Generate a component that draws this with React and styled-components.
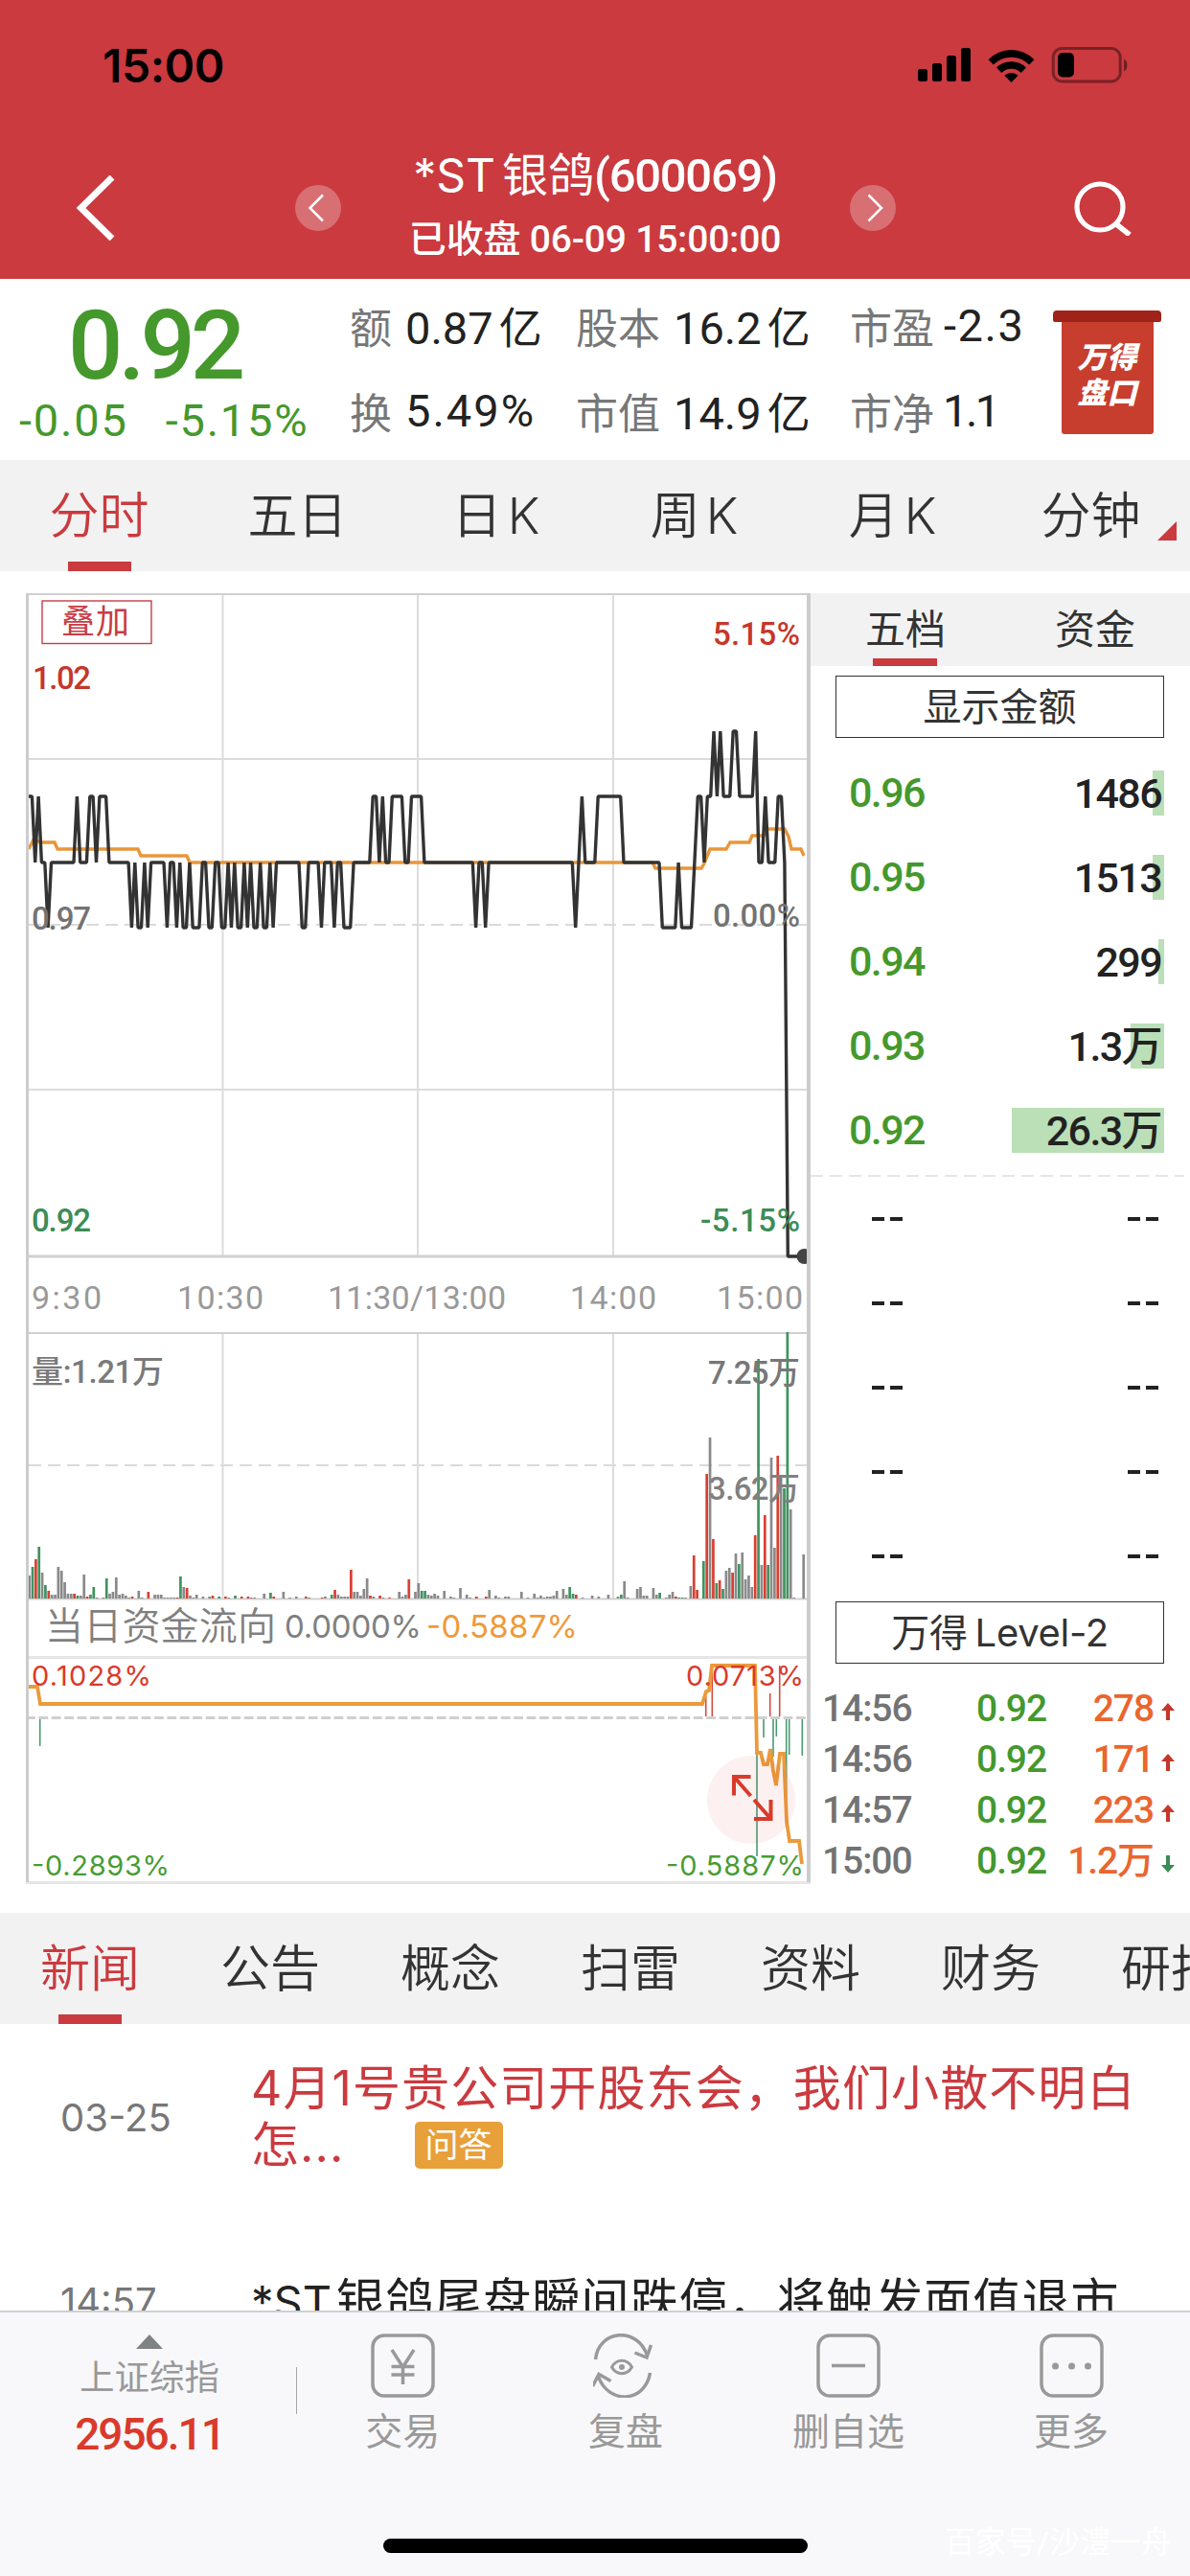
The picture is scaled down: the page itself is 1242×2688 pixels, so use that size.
import styled, {createGlobalStyle} from 'styled-components';

const GlobalStyle = createGlobalStyle`
    * {
        box-sizing: border-box;
    }

    body {
        margin: 0;
        background: #fff;
        font-family: Roboto, 'Noto Sans CJK SC', sans-serif;
        color: #333;
    }

    svg {
        display: block;
        flex: none;
    }
`;

const Screen = styled.div`
    display: flex;
    flex-direction: column;
    width: 1242px;
    height: 2688px;
    overflow: hidden;
    white-space: nowrap;
`;

/* header */
const Header = styled.header`
    height: 291px;
    flex: none;
    background: #ca3a3f;
    color: #fff;
`;
const StatusBar = styled.div`
    display: flex;
    align-items: center;
    justify-content: space-between;
    height: 136px;
    padding: 0 64px 0 107px;
    color: #000;
`;
const Clock = styled.span`
    font-family: Inter, sans-serif;
    font-weight: 600;
    font-size: 48px;
    letter-spacing: -0.4px;
`;
const Nav = styled.nav`
    display: grid;
    grid-template-columns: 1fr 627px 1fr;
    align-items: center;
    height: 155px;
    padding: 7px 61px 0 79px;
`;
const Switcher = styled.div`
    display: flex;
    align-items: center;
    justify-content: space-between;
    margin-left: -9px;
    margin-right: 9px;
`;
const Titles = styled.div`
    text-align: center;
    margin-top: -1px;
`;
const Title = styled.h1`
    margin: 0;
    font-size: 49px;
    font-weight: 500;
    line-height: 66px;
    letter-spacing: -1.3px;

    span {
        font-family: Inter, 'Noto Sans CJK SC', sans-serif;
        font-weight: 400;
        font-size: 48px;
        letter-spacing: 0;
    }

    i {
        font-style: normal;
        margin-left: 7px;
    }
`;
const Subtitle = styled.p`
    margin: 0;
    font-size: 39px;
    font-weight: 500;
    line-height: 67px;
    letter-spacing: -0.2px;
`;
const RightEnd = styled.div`
    display: flex;
    justify-content: flex-end;
`;

/* quote */
const Quote = styled.section`
    display: flex;
    flex: none;
    height: 189px;
`;
const Price = styled.div`
    width: 366px;
    padding-top: 20px;
    color: #45982c;
`;
const BigPrice = styled.div`
    padding-left: 71px;
    font-size: 101px;
    font-weight: 500;
    line-height: 100px;
    letter-spacing: -5px;
`;
const Change = styled.div`
    display: flex;
    gap: 39px;
    padding-left: 20px;
    font-size: 47px;
    line-height: 56px;
    letter-spacing: 1.8px;
`;
const Stats = styled.div`
    display: grid;
    grid-template-columns: 236px 286px 212px;
    grid-template-rows: 89px 89px;
    padding-top: 4px;
    margin-left: -1px;
`;
const Stat = styled.div`
    display: flex;
    align-items: center;
    gap: ${(p) => p.$gap || 14}px;
    font-size: 47px;
    letter-spacing: ${(p) => p.$ls || 0}px;
    color: #222;
`;
const Label = styled.span`
    font-size: 44px;
    letter-spacing: 0;
    color: #777;
`;
const Unit = styled.span`
    font-size: 45px;
    margin-left: 6px;
`;
const Badge = styled.div`
    width: 113px;
    margin-top: 33px;

    &:before {
        content: '';
        display: block;
        height: 12px;
        border-radius: 4px 4px 2px 2px;
        background: #a0231a;
    }
`;
const BadgeBody = styled.div`
    width: 96px;
    height: 117px;
    margin: 0 auto;
    padding-top: 19px;
    border-radius: 0 0 3px 3px;
    background: #c83e2e;
    color: #fff;
    text-align: center;
    font-weight: 900;
    font-style: italic;
    font-size: 31px;
    line-height: 37px;
`;

/* tab bars */
const Tabs = styled.div`
    display: flex;
    flex: none;
    height: 116px;
    position: relative;
    overflow: hidden;
    background: #f2f2f2;
`;
const Tab = styled.div`
    width: ${(p) => p.$width}px;
    flex: none;
    position: relative;
    text-align: center;
    font-size: 52px;
    line-height: 118px;
    font-family: Inter, 'Noto Sans CJK SC', sans-serif;
    font-weight: 350;
    color: ${(p) => (p.$active ? '#ca3a3f' : '#333')};

    i {
        font-style: normal;
        margin-left: 6px;
    }

    &:after {
        content: '';
        display: ${(p) => (p.$active ? 'block' : 'none')};
        position: absolute;
        left: 50%;
        bottom: 0;
        width: 66px;
        height: 10px;
        margin-left: -33px;
        background: #ca3a3f;
    }
`;
const Corner = styled.div`
    position: absolute;
    right: 14px;
    bottom: 32px;
    border-left: 20px solid transparent;
    border-bottom: 20px solid #ca3a3f;
`;

/* chart and order book */
const Market = styled.section`
    display: flex;
    flex: none;
    height: 1400px;
    padding: 23px 0 31px 27px;
`;
const Side = styled.aside`
    flex: 1;
    display: flex;
    flex-direction: column;
`;
const SideTabs = styled.div`
    display: flex;
    height: 76px;
    background: #f2f2f2;
`;
const SideTab = styled.div`
    flex: 1;
    position: relative;
    text-align: center;
    font-size: 42px;
    line-height: 78px;

    &:after {
        content: '';
        display: ${(p) => (p.$active ? 'block' : 'none')};
        position: absolute;
        left: 65px;
        bottom: 0;
        width: 67px;
        height: 8px;
        background: #ca3a3f;
    }
`;
const BoxButton = styled.div`
    width: 343px;
    height: 66px;
    margin: ${(p) => p.$top}px 0 0 26px;
    border: 1.5px solid #333;
    text-align: center;
    font-size: 40px;
    line-height: 63px;
    letter-spacing: ${(p) => p.$ls || 0}px;
    word-spacing: -3px;
    font-family: Inter, 'Noto Sans CJK SC', sans-serif;
`;
const Levels = styled.div`
    padding: ${(p) => p.$pad};
`;
const Level = styled.div`
    display: flex;
    align-items: center;
    justify-content: space-between;
    height: 88px;
    padding: 0 27px 0 40px;
    font-size: 43px;
    font-weight: 500;
    line-height: 49px;
    letter-spacing: -1.6px;
    color: #45982c;
`;
const Amount = styled.span`
    display: flex;
    justify-content: flex-end;
    width: 159px;
    height: 47px;
    padding-right: 3px;
    color: #222;
    background: linear-gradient(#bbdfb7, #bbdfb7) right / ${(p) => p.$bar}px 100%
        no-repeat;
`;
const Empty = styled.div`
    display: flex;
    justify-content: space-between;
    align-items: center;
    height: 88px;
    padding: 0 33px 0 64px;
`;
const Dashes = styled.span`
    display: flex;
    gap: 6px;

    &:before,
    &:after {
        content: '';
        width: 13px;
        height: 4px;
        background: #222;
    }
`;
const Trades = styled.div`
    padding-top: 19px;
`;
const Trade = styled.div`
    display: grid;
    grid-template-columns: 136px 98px 112px 1fr;
    height: 53px;
    padding-left: 12px;
    font-size: 39px;
    font-weight: 500;
    line-height: 56px;
    letter-spacing: -1.1px;
    color: #737373;

    b {
        font-weight: 500;
        color: #45982c;
        text-align: right;
    }

    em {
        font-style: normal;
        color: #e9662f;
        text-align: right;
    }

    svg {
        margin-left: 8px;
        margin-top: 22px;
    }
`;

/* news */
const News = styled.section`
    flex: none;
    height: 299px;
    overflow: hidden;
    padding-top: 38px;
`;
const NewsItem = styled.article`
    display: flex;
    align-items: center;
    margin-bottom: 104px;
`;
const Time = styled.time`
    width: 262px;
    flex: none;
    padding-left: 63px;
    font-family: Inter, sans-serif;
    font-size: 40px;
    line-height: 59px;
    color: #777;
`;
const Headline = styled.h2`
    margin: 0;
    width: 940px;
    font-family: Inter, 'Noto Sans CJK SC', sans-serif;
    font-size: 50px;
    font-weight: 400;
    line-height: 59px;
    letter-spacing: 1.1px;
    color: ${(p) => (p.$hot ? '#ca3a3f' : '#222')};

    i {
        font-style: normal;
        margin-left: 5px;
    }
`;
const Ticker = styled.span`
    font-size: 47px;
    letter-spacing: 0;
`;
const Tag = styled.span`
    display: inline-block;
    vertical-align: 5px;
    width: 92px;
    height: 49px;
    margin: -5px 0 0 73px;
    border-radius: 5px;
    background: #e8a03a;
    color: #fff;
    font-size: 35px;
    line-height: 49px;
    letter-spacing: 0;
    text-align: center;
`;

/* bottom bar */
const Footer = styled.footer`
    flex: none;
    display: flex;
    flex-direction: column;
    position: relative;
    height: 277px;
    border-top: 2px solid #d0d0d2;
    background: #f8f8fa;
`;
const Actions = styled.div`
    display: flex;
    height: 150px;
`;
const Index = styled.div`
    display: flex;
    flex-direction: column;
    align-items: center;
    width: 309px;
    padding: 23px 0 0 3px;
    color: #999;
    font-size: 36.5px;
    line-height: 62px;

    strong {
        font-size: 46px;
        font-weight: 500;
        line-height: 55px;
        letter-spacing: -2px;
        color: #d93a2b;
    }
`;
const Divider = styled.div`
    width: 1px;
    height: 49px;
    margin: 57px -6px 0 0;
    background: #a5a5a5;
`;
const Action = styled.div`
    display: flex;
    flex-direction: column;
    align-items: center;
    width: 232.6px;
    padding-top: 22px;
    font-size: 39px;
    line-height: 72px;
    color: #999;
`;
const HomeBar = styled.div`
    width: 443px;
    height: 15px;
    margin: 86px auto 0;
    border-radius: 8px;
    background: #000;
`;
const Watermark = styled.div`
    position: absolute;
    right: 19px;
    bottom: 15px;
    font-size: 32px;
    line-height: 40px;
    color: #fff;
`;

// [price level, minutes it lasts]
const priceRuns = [
    [2, 2], [1, 1], [2, 1], [1, 2], [0, 1], [1, 8], [2, 1], [1, 3], [2, 2],
    [1, 1], [2, 3], [1, 7], [0, 1], [1, 1], [0, 2], [1, 1], [0, 1], [1, 5],
    [0, 1], [1, 2], [0, 1], [1, 1], [0, 2], [1, 1], [0, 3], [1, 2], [0, 2],
    [1, 2], [0, 2], [1, 1], [0, 1], [1, 1], [0, 2], [1, 1], [0, 1], [1, 1],
    [0, 2], [1, 1], [0, 2], [1, 1], [0, 1], [1, 8], [0, 2], [1, 4], [0, 1],
    [1, 3], [0, 1], [1, 2], [0, 3], [1, 6], [2, 2], [1, 1], [2, 1], [1, 2],
    [2, 4], [1, 2], [2, 4], [1, 16], [0, 1], [1, 2], [0, 1], [1, 27], [0, 1],
    [1, 1], [2, 1], [1, 4], [2, 8], [1, 12], [0, 5], [1, 1], [0, 4], [1, 1],
    [2, 2], [1, 1], [2, 2], [3, 1], [2, 1], [3, 1], [2, 3], [3, 2], [2, 5],
    [3, 1], [1, 2], [2, 1], [1, 3], [2, 2], [1, 1], [-5, 6],
];
const levelY = {3: 763, 2: 831, 1: 900, 0: 968, '-5': 1311};
const minuteX = (i) => 30 + i * 3.357;

const pricePoints = priceRuns
    .flatMap(([level, count]) => Array(count).fill(level))
    .map((level, i) => `${minuteX(i).toFixed(1)},${levelY[level]}`)
    .join(' ');

const averagePoints =
    '30,886 35,876 43,879 57,879 60,886 144,886 147,893 195,893 198,900 681,900 684,906 732,906 735,901 741,886 758,886 762,879 782,879 785,872 797,872 801,865 819,865 823,873 826,886 836,886 839,893';

// minute, colour, height
const volume =
    '0k24 1g33 2r41 3g54 4k27 5g14 6r8 7k4 8k4 9k33 10k29 11k17 12k5 13k5 14r5 15g3 16k3 17k25 18r2 19g4 20g12 21k1 23k1 24g21 25k5 26k7 27k22 28k4 29k5 30k3 31k1 32r2 34k8 35k1 37r7 39k4 40k4 41k4 42k1 43k1 44k1 45k1 46r1 47g23 48k12 49r11 50k3 51k1 52k4 54k2 56k2 57r3 59g2 61r2 62k1 64g3 66r2 68r2 69k1 70k1 73k5 75g6 76r2 79k7 81k1 83k2 86r2 87k1 91r1 92k2 94g4 95r9 96k4 97k2 98k2 99k2 100r30 101k7 102k7 103k3 104k10 105k21 106r3 107k2 109r3 110k1 112r1 115k7 116k2 117k4 118r20 120k7 121k16 122g8 123g8 124k4 125k3 126k5 127k3 129k8 131k2 132k1 134k11 136k4 137k1 139r2 142r2 143k9 145k3 146k1 148k2 149k2 153k7 155k1 157k5 158k1 159k3 160k1 161k2 162k2 163k3 164k8 166k10 167k4 168g12 169g5 170r4 172k1 175k3 177k2 180k4 183k2 184g4 185k18 186k1 189k10 190k12 191k3 192k3 194k11 195k4 196g6 198k1 199k4 200k7 201r2 202g1 203g1 204k1 205k13 206r45 207r9 209g39 210r130 211k168 212r62 213g16 214r19 215g10 216k29 217k32 218r27 219k47 220g36 221k48 222k20 223k24 224k12 225r66 226g250 227k35 228r87 229g35 230k147 231k53 232r149 233k129 234g115 235g278 236k93 237k1 240k46';
const volumeColors = {k: '#8a8a8a', g: '#3f9360', r: '#d93f32'};
const volumeBars = volume.split(' ').map((item) => {
    const [, minute, color, height] = item.match(/(\d+)([kgr])(\d+)/);
    return {
        x: minute > 204 ? 720.8 + (minute - 205) * 3.367 : minuteX(+minute) + 0.6,
        color: volumeColors[color],
        height: +height,
    };
});

const flowPoints =
    '30,1760 39,1760 42,1778 733,1778 737,1765 740,1764 743,1738 788,1738 790,1829 794,1829 797,1841 801,1841 804,1825 807,1848 810,1863 814,1830 818,1830 821,1900 824,1921 834,1921 837,1945';
const flowBars = [
    [736.7, 1770, 1791], [743.3, 1740, 1791], [803.7, 1767, 1791],
    [813.7, 1738, 1791], [41.7, 1793, 1822], [790, 1793, 1937],
    [797, 1793, 1813], [807, 1793, 1833], [810.3, 1793, 1812],
    [820.7, 1793, 1907], [823.7, 1793, 1831], [837.3, 1793, 1832],
];

// text, x, baseline, width, colour, size, weight, font
const din = "Roboto, 'Noto Sans CJK SC', sans-serif";
const sans = "Inter, 'Noto Sans CJK SC', sans-serif";
const chartLabels = [
    ['叠加', 64, 661, 71, '#c63d47', 35, 400, din],
    ['1.02', 34, 719, 61, '#c5372a', 33, 500, din],
    ['5.15%', 744, 673, 91, '#c5372a', 33, 500, din],
    ['0.97', 33, 970, 62, '#737373', 33, 500, din],
    ['0.00%', 744, 967, 91, '#737373', 33, 500, din],
    ['0.92', 33, 1285, 62, '#3c8c57', 33, 500, din],
    ['-5.15%', 731, 1285, 104, '#3c8c57', 33, 500, din],
    ['9:30', 33, 1366, 73, '#999', 34, 400, din],
    ['10:30', 185, 1366, 90, '#999', 34, 400, din],
    ['11:30/13:00', 342, 1366, 186, '#999', 34, 400, din],
    ['14:00', 595, 1366, 90, '#999', 34, 400, din],
    ['15:00', 748, 1366, 90, '#999', 34, 400, din],
    ['量:1.21万', 33, 1443, 138, '#7a7a7a', 33, 500, din],
    ['7.25万', 739, 1444, 96, '#777', 33, 500, din],
    ['3.62万', 739, 1565, 96, '#808080', 33, 500, din],
    ['当日资金流向', 47, 1711, 241, '#808080', 40, 350, din],
    ['0.0000%', 297, 1709, 143, '#808080', 33, 400, sans],
    ['-0.5887%', 445, 1709, 158, '#ee9a3a', 33, 400, sans],
    ['0.1028%', 33, 1759, 125, '#d93a2b', 29, 400, sans],
    ['0.0713%', 716, 1759, 123, '#d93a2b', 29, 400, sans],
    ['-0.2893%', 33, 1957, 144, '#479c33', 29, 400, sans],
    ['-0.5887%', 695, 1957, 144, '#479c33', 29, 400, sans],
];

const asks = [
    ['0.96', '1486', 12],
    ['0.95', '1513', 12],
    ['0.94', '299', 6],
    ['0.93', '1.3万', 35],
    ['0.92', '26.3万', 159],
];

const trades = [
    ['14:56', '0.92', '278', true],
    ['14:56', '0.92', '171', true],
    ['14:57', '0.92', '223', true],
    ['15:00', '0.92', '1.2万', false],
];

const newsTabs = ['新闻', '公告', '概念', '扫雷', '资料', '财务', '研报'];

const StatusIcons = () => (
    <svg width='220' height='38' viewBox='0 0 220 38'>
        <rect x='0' y='23' width='10' height='13' rx='2.5' />
        <rect x='15' y='17' width='10' height='19' rx='2.5' />
        <rect x='30' y='9' width='10' height='27' rx='2.5' />
        <rect x='45' y='1' width='10' height='35' rx='2.5' />
        <path d='M73.5 13.2a33.5 33.5 0 0 1 48 0l-5.3 5.4a26 26 0 0 0-37.4 0z' />
        <path d='M82 21.6a21.8 21.8 0 0 1 31 0l-5.3 5.3a14.4 14.4 0 0 0-20.4 0z' />
        <path d='M90.3 29.8a10.4 10.4 0 0 1 14.4 0L97.5 37z' />
        <rect
            x='141.2'
            y='1.5'
            width='70'
            height='34.5'
            rx='9.5'
            fill='none'
            stroke='#000'
            strokeOpacity='0.4'
            strokeWidth='3'
        />
        <rect x='146' y='6' width='17' height='25.5' rx='5' />
        <path d='M215 12.5c4.5 2 4.5 11 0 13z' fillOpacity='0.45' />
    </svg>
);

const RoundArrow = ({next}) => (
    <svg width='48' height='48' viewBox='0 0 48 48' fill='none'>
        <circle cx='24' cy='24' r='24' fill='#fff' fillOpacity='0.27' />
        <path
            d={next ? 'M19.5 10.5L33 24 19.5 37.5' : 'M29 10.5L15.5 24 29 37.5'}
            stroke='#fff'
            strokeWidth='2.5'
        />
    </svg>
);

const TradeArrow = ({up}) => (
    <svg width='14' height='18' viewBox='0 0 14 18'>
        {up ? (
            <path d='M7 0l7 8H9v10H5V8H0z' fill='#c5372a' />
        ) : (
            <path d='M7 18l7-8H9V0H5v10H0z' fill='#3c8c57' />
        )}
    </svg>
);

const ActionIcon = ({children}) => (
    <svg
        width='67'
        height='67'
        viewBox='0 0 67 67'
        fill='none'
        stroke='#999'
        strokeWidth='3.5'
    >
        {children}
    </svg>
);
const Frame = () => (
    <rect x='2' y='2' width='63' height='63' rx='12' />
);

const Chart = () => (
    <svg width='819' height='1348' viewBox='27 619 819 1348' fill='none'>
        <g stroke='#dcdcdc' strokeWidth='2'>
            <path d='M232.5 620V1311M436 620V1311M640 620V1311' />
            <path d='M232.5 1391V1668M436 1391V1668M640 1391V1668' />
            <path d='M28 792H842M28 1137H842' />
        </g>
        <g stroke='#d0d0d0' strokeWidth='2'>
            <path d='M27 620H846M28 1391H842M28 1668.5H842' />
            <path d='M28 1311H842' strokeWidth='3' />
            <path d='M28 1729.5H842M27 1964.5H846' stroke='#e6e6e6' strokeWidth='3' />
            <path
                d='M30 965H842M30 1529H842'
                stroke='#dadada'
                strokeDasharray='13 7'
            />
        </g>

        <rect x='44' y='627' width='114' height='44.5' stroke='#c63d47' strokeWidth='1.4' />

        <g>
            {volumeBars.map((bar) => (
                <rect
                    key={bar.x}
                    x={bar.x - 1.3}
                    y={1668 - bar.height}
                    width='2.7'
                    height={bar.height}
                    fill={bar.color}
                />
            ))}
        </g>

        {flowBars.map(([x, from, to]) => (
            <path
                key={x}
                d={`M${x} ${from}V${to}`}
                stroke={to === 1791 ? '#d8493f' : '#4a9a72'}
                strokeWidth='1.6'
            />
        ))}
        <path
            d='M30 1792.5H842'
            stroke='#cfcfcf'
            strokeWidth='3.2'
            strokeDasharray='9.8 3.6'
            strokeDashoffset='3'
        />
        <polyline points={flowPoints} stroke='#eb9a3c' strokeWidth='3.8' />

        <polyline points={averagePoints} stroke='#e8963a' strokeWidth='3.4' />
        <polyline
            points={pricePoints}
            stroke='#333'
            strokeWidth='3.4'
            strokeLinejoin='bevel'
        />
        <circle cx='839.5' cy='1311' r='8' fill='#444' />

        {chartLabels.map(([text, x, y, width, color, size, weight, font]) => (
            <text
                key={text + x + y}
                x={x}
                y={y}
                textLength={width}
                fill={color}
                fontSize={size}
                fontWeight={weight}
                fontFamily={font}
            >
                {text}
            </text>
        ))}

        <circle cx='784' cy='1878' r='46' fill='#d93a2b' fillOpacity='0.07' />
        <path
            d='M783.5 1854H766V1873.5M766 1854L783.5 1874M787 1898H804.5V1878M804.5 1898L787 1878'
            stroke='#d93a2b'
            strokeWidth='4'
        />

        <path d='M28.5 619V1964' stroke='#ccc' strokeWidth='3' />
        <path d='M844 619V1964' stroke='#ccc' strokeWidth='4' />
    </svg>
);

const App = () => {
    return (
        <Screen>
            <GlobalStyle />
            <Header>
                <StatusBar>
                    <Clock>15:00</Clock>
                    <StatusIcons />
                </StatusBar>
                <Nav>
                    <svg width='42' height='68' viewBox='0 0 42 68' fill='none'>
                        <path d='M38 2L5.5 34 38 66' stroke='#fff' strokeWidth='6.8' />
                    </svg>
                    <Switcher>
                        <RoundArrow />
                        <Titles>
                            <Title>
                                <span>
                                    *ST<i>银鸽</i>
                                </span>
                                (600069)
                            </Title>
                            <Subtitle>已收盘 06-09 15:00:00</Subtitle>
                        </Titles>
                        <RoundArrow next />
                    </Switcher>
                    <RightEnd>
                        <svg width='60' height='58' viewBox='0 0 60 58' fill='none'>
                            <g stroke='#fff' strokeWidth='5.2'>
                                <circle cx='27' cy='28' r='24' />
                                <path d='M43.5 45.5L58 57' strokeWidth='5.5' />
                            </g>
                        </svg>
                    </RightEnd>
                </Nav>
            </Header>

            <Quote>
                <Price>
                    <BigPrice>0.92</BigPrice>
                    <Change>
                        <span>-0.05</span>
                        <span>-5.15%</span>
                    </Change>
                </Price>
                <Stats>
                    <Stat>
                        <Label>额</Label>
                        <span>0.87<Unit>亿</Unit></span>
                    </Stat>
                    <Stat>
                        <Label>股本</Label>
                        <span>16.2<Unit>亿</Unit></span>
                    </Stat>
                    <Stat $gap={10} $ls={1.6}>
                        <Label>市盈</Label>
                        <span>-2.3</span>
                    </Stat>
                    <Stat $ls={2}>
                        <Label>换</Label>
                        <span>5.49%</span>
                    </Stat>
                    <Stat>
                        <Label>市值</Label>
                        <span>14.9<Unit>亿</Unit></span>
                    </Stat>
                    <Stat $gap={9} $ls={-2.5}>
                        <Label>市净</Label>
                        <span>1.1</span>
                    </Stat>
                </Stats>
                <Badge>
                    <BadgeBody>
                        万得
                        <br />
                        盘口
                    </BadgeBody>
                </Badge>
            </Quote>

            <Tabs>
                <Tab $width={207} $active>分时</Tab>
                <Tab $width={207}>五日</Tab>
                <Tab $width={207}>日<i>K</i></Tab>
                <Tab $width={207}>周<i>K</i></Tab>
                <Tab $width={207}>月<i>K</i></Tab>
                <Tab $width={207}>分钟</Tab>
                <Corner />
            </Tabs>

            <Market>
                <Chart />
                <Side>
                    <SideTabs>
                        <SideTab $active>五档</SideTab>
                        <SideTab>资金</SideTab>
                    </SideTabs>
                    <BoxButton $top={10}>显示金额</BoxButton>
                    <Levels $pad='13px 0 0'>
                        {asks.map(([price, amount, bar]) => (
                            <Level key={price}>
                                {price}
                                <Amount $bar={bar}>{amount}</Amount>
                            </Level>
                        ))}
                    </Levels>
                    <svg width='390' height='5' viewBox='0 0 390 5'>
                        <path d='M0 4H390' stroke='#e6e6e6' strokeWidth='2' strokeDasharray='13 7' />
                    </svg>
                    <Levels>
                        {[0, 1, 2, 3, 4].map((row) => (
                            <Empty key={row}>
                                <Dashes />
                                <Dashes />
                            </Empty>
                        ))}
                    </Levels>
                    <BoxButton $top={3} $ls={-0.3}>万得 Level-2</BoxButton>
                    <Trades>
                        {trades.map(([time, price, amount, up]) => (
                            <Trade key={time + amount}>
                                {time}
                                <b>{price}</b>
                                <em>{amount}</em>
                                <TradeArrow up={up} />
                            </Trade>
                        ))}
                    </Trades>
                </Side>
            </Market>

            <Tabs>
                {newsTabs.map((name, i) => (
                    <Tab key={name} $width={188} $active={i === 0}>
                        {name}
                    </Tab>
                ))}
            </Tabs>

            <News>
                <NewsItem>
                    <Time>03-25</Time>
                    <Headline $hot>
                        4月1号贵公司开股东会，我们小散不明白
                        <br />
                        怎...<Tag>问答</Tag>
                    </Headline>
                </NewsItem>
                <NewsItem>
                    <Time>14:57</Time>
                    <Headline>
                        <Ticker>*ST</Ticker>
                        <i>银鸽尾盘瞬间跌停，将触发面值退市</i>
                    </Headline>
                </NewsItem>
            </News>

            <Footer>
                <Actions>
                    <Index>
                        <svg width='28' height='15' viewBox='0 0 28 15'>
                            <path d='M14 0l14 15H0z' fill='#7f8383' />
                        </svg>
                        上证综指
                        <strong>2956.11</strong>
                    </Index>
                    <Divider />
                    <Action>
                        <ActionIcon>
                            <Frame />
                            <path d='M22 17l11.5 18L45 17M33.5 35v18M21.5 34.5h24M21.5 43h24' />
                        </ActionIcon>
                        交易
                    </Action>
                    <Action>
                        <ActionIcon>
                            <g transform='translate(-3.5 0)'>
                                <path d='M6 27C9-4 50-8 60 23M63 41C58 72 20 75 9 45' />
                                <path d='M47 20l12.500 5 4.500-13M3 55l6.500-12.500 12.500 7' />
                                <path d='M23 35c5-9 16-9 21 0-5 9-16 9-21 0z' strokeWidth='3' />
                                <circle cx='33.5' cy='35' r='3' fill='#999' stroke='none' />
                            </g>
                        </ActionIcon>
                        复盘
                    </Action>
                    <Action>
                        <ActionIcon>
                            <Frame />
                            <path d='M16 33.5h35' />
                        </ActionIcon>
                        删自选
                    </Action>
                    <Action>
                        <ActionIcon>
                            <Frame />
                            <g fill='#999' stroke='none'>
                                <circle cx='16.5' cy='34' r='3.5' />
                                <circle cx='33.5' cy='34' r='3.5' />
                                <circle cx='50.5' cy='34' r='3.5' />
                            </g>
                        </ActionIcon>
                        更多
                    </Action>
                </Actions>
                <HomeBar />
                <Watermark>百家号/沙澧一舟</Watermark>
            </Footer>
        </Screen>
    );
};
export default App;
